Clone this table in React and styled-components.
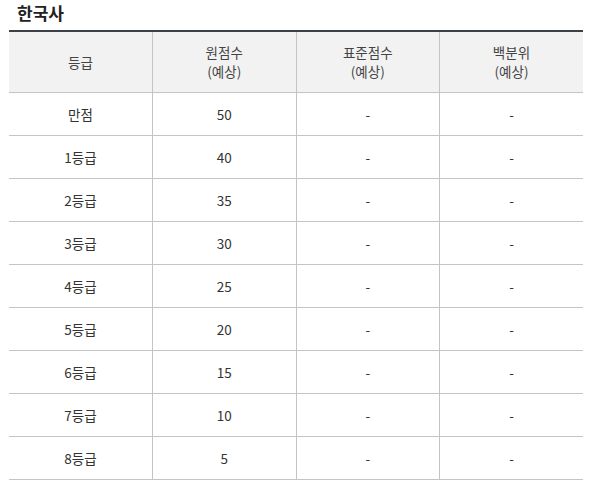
import React from "react";
import styled, { createGlobalStyle } from "styled-components";

const GlobalStyle = createGlobalStyle`
  body {
    margin: 0;
    background: #fff;
    font-family: "Noto Sans CJK KR", "Noto Sans", sans-serif;
    color: #333;
  }
`;

const Wrapper = styled.div`
  padding: 1px 10px 0 9px;
  width: 574px;
`;

const Title = styled.h3`
  margin: 0 0 5px 8px;
  font-size: 17px;
  line-height: 24px;
  font-weight: 700;
  color: #222;
`;

const Table = styled.table`
  width: 574px;
  border-collapse: collapse;
  table-layout: fixed;
  border-top: 2px solid #3c4048;
  font-size: 13.5px;
`;

const Th = styled.th`
  height: 60px;
  padding: 0;
  background: #f2f2f2;
  font-weight: 400;
  line-height: 19px;
  color: #444;
  border-bottom: 1px solid #c4c4c4;
  border-left: ${(p) => (p.$first ? "none" : "1px solid #c4c4c4")};
`;

const Td = styled.td`
  height: 42px;
  padding: 0;
  text-align: center;
  color: #333;
  border-bottom: 1px solid #c4c4c4;
  border-left: ${(p) => (p.$first ? "none" : "1px solid #c4c4c4")};
`;

const rows = [
  ["만점", "50"],
  ["1등급", "40"],
  ["2등급", "35"],
  ["3등급", "30"],
  ["4등급", "25"],
  ["5등급", "20"],
  ["6등급", "15"],
  ["7등급", "10"],
  ["8등급", "5"],
];

export default function App() {
  return (
    <>
      <GlobalStyle />
      <Wrapper>
        <Title>한국사</Title>
        <Table>
          <thead>
            <tr>
              <Th $first>등급</Th>
              <Th>
                원점수
                <br />
                (예상)
              </Th>
              <Th>
                표준점수
                <br />
                (예상)
              </Th>
              <Th>
                백분위
                <br />
                (예상)
              </Th>
            </tr>
          </thead>
          <tbody>
            {rows.map(([grade, score]) => (
              <tr key={grade}>
                <Td $first>{grade}</Td>
                <Td>{score}</Td>
                <Td>-</Td>
                <Td>-</Td>
              </tr>
            ))}
          </tbody>
        </Table>
      </Wrapper>
    </>
  );
}
